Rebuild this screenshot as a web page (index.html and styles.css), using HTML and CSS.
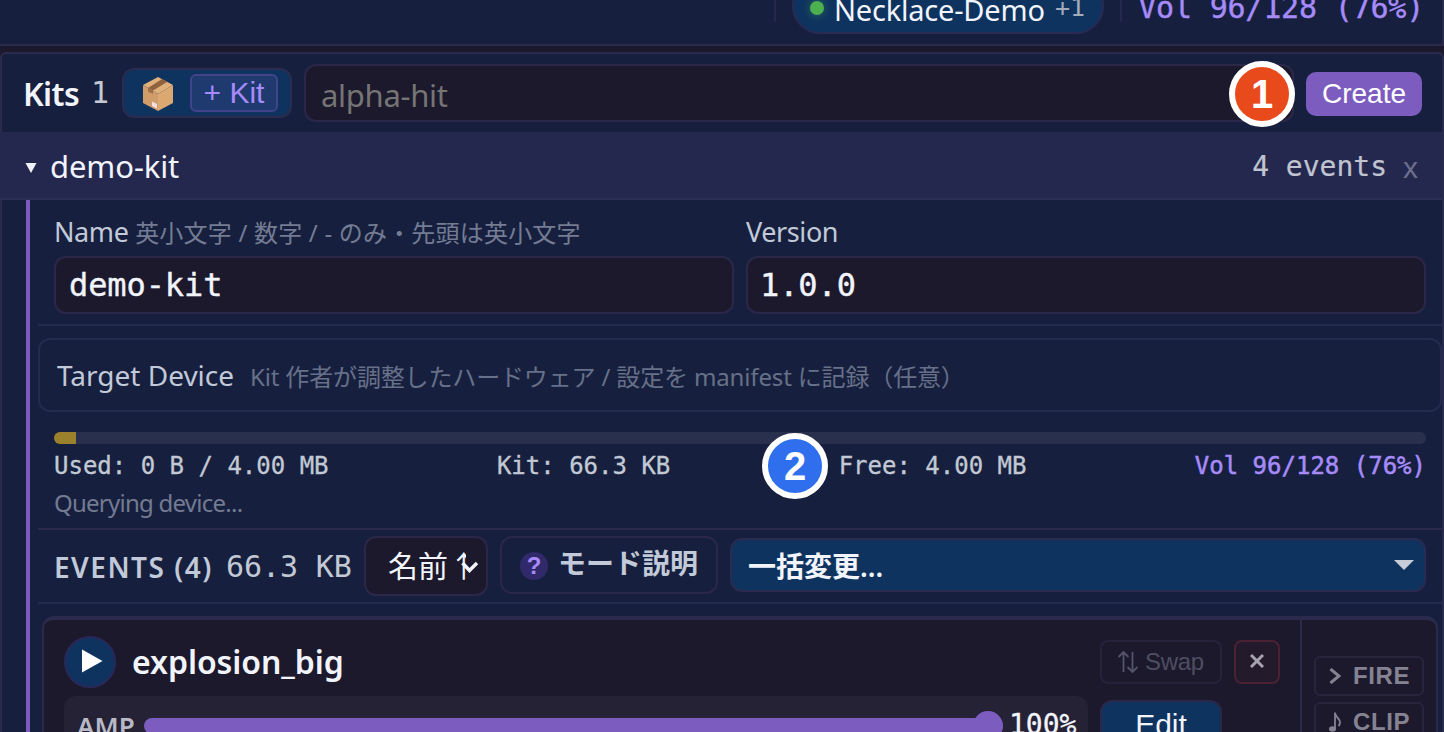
FILE: index.html
```html
<!DOCTYPE html>
<html lang="ja">
<head>
    <meta charset="UTF-8">
    <meta name="viewport" content="width=device-width, initial-scale=1.0">
    <title>Kits</title>
    <link rel="stylesheet" href="styles.css">
</head>
<body>
    <div class="topbar">
        <span class="sep"></span>
        <div class="device">
            <span class="dot"></span>
            <span class="device-name">Necklace-Demo</span>
            <span class="device-more">+1</span>
        </div>
        <span class="sep"></span>
        <span class="top-vol">Vol 96/128 (76%)</span>
    </div>

    <div class="panel">
        <div class="kits-header">
            <span class="kits-title">Kits</span>
            <span class="kits-count">1</span>
            <div class="kit-actions">
                <svg class="box-icon" viewBox="0 0 32 36" width="32" height="36">
                    <path d="M16 1 L31 9 L16 18 L1 9 Z" fill="#e0b07c"/>
                    <path d="M1 9 L16 18 V35 L1 27 Z" fill="#d09c69"/>
                    <path d="M31 9 L16 18 V35 L31 27 Z" fill="#dba872"/>
                    <path d="M20 3 L25 6 L11 14.500 L6 12 Z" fill="#8e623f"/>
                    <path d="M6 12 L11 14.500 V18 L6 15.500 Z" fill="#a06f45"/>
                    <path d="M10 25.500 L15 28 V32.500 L10 30 Z" fill="#f3dfe2"/>
                </svg>
                <button class="add-kit">+ Kit</button>
            </div>
            <input class="new-kit" type="text" placeholder="alpha-hit">
            <button class="create">Create</button>
        </div>

        <div class="kit-row">
            <svg class="caret" viewBox="0 0 12 10" width="12" height="10"><path d="M0.500 0 H11.500 L6 10 Z" fill="#f0f2fa"/></svg>
            <span class="kit-name">demo-kit</span>
            <span class="kit-events">4 events</span>
            <span class="kit-remove">x</span>
        </div>

        <div class="kit-body">
            <div class="fields">
                <div class="field">
                    <label for="name">Name <small>英小文字 / 数字 / - のみ・先頭は英小文字</small></label>
                    <input type="text" id="name" value="demo-kit">
                </div>
                <div class="field">
                    <label for="version">Version</label>
                    <input type="text" id="version" value="1.0.0">
                </div>
            </div>

            <div class="target">
                <span class="target-title">Target Device</span>
                <span class="target-note">Kit 作者が調整したハードウェア / 設定を manifest に記録（任意）</span>
            </div>

            <div class="storage">
                <div class="bar"><div class="bar-fill"></div></div>
                <div class="stats">
                    <span>Used: 0 B / 4.00 MB</span>
                    <span>Kit: 66.3 KB</span>
                    <span>Free: 4.00 MB</span>
                    <span class="vol">Vol 96/128 (76%)</span>
                </div>
                <div class="query">Querying device...</div>
            </div>

            <div class="events-bar">
                <span class="events-title">EVENTS (4)</span>
                <span class="events-size">66.3 KB</span>
                <div class="sort">
                    <div class="sort-label">名前 ↑</div>
                    <svg class="sort-caret" viewBox="0 0 20 14" width="20" height="14"><path d="M2.500 2 L9.500 9.500 L17 2" fill="none" stroke="#f2f4fc" stroke-width="3.500"/></svg>
                </div>
                <button class="mode"><span class="help">?</span><span class="mode-text">モード説明</span></button>
                <div class="bulk">
                    <span>一括変更...</span>
                    <svg viewBox="0 0 20 10" width="20" height="10"><path d="M0 0 H20 L10 10 Z" fill="#c8ccd8"/></svg>
                </div>
            </div>

            <div class="event">
                <div class="event-main">
                    <div class="event-head">
                        <div class="play"><svg viewBox="0 0 21 24" width="21" height="24"><path d="M0 0.500 L20.500 12 L0 23.500 Z" fill="#fff"/></svg></div>
                        <span class="event-name">explosion_big</span>
                        <button class="swap">
                            <svg viewBox="0 0 20 22" width="20" height="22"><path d="M5.500 21 V1 M0.500 6 L5.500 1 L10.500 6 M14.500 1 V21 M9.500 16 L14.500 21 L19.500 16" fill="none" stroke="#55546a" stroke-width="1.800"/></svg>
                            Swap
                        </button>
                        <button class="delete"><svg viewBox="0 0 14 14" width="14" height="14"><path d="M1 1 L13 13 M13 1 L1 13" stroke="#a7a3ae" stroke-width="3"/></svg></button>
                    </div>
                    <div class="event-controls">
                        <div class="amp">
                            <span class="amp-label">AMP</span>
                            <div class="slider"><span class="thumb"></span></div>
                            <span class="amp-value">100%</span>
                        </div>
                        <button class="edit">Edit</button>
                    </div>
                </div>
                <div class="event-side">
                    <button><svg viewBox="0 0 12 16" width="12" height="16"><path d="M1.500 1 L10 8 L1.500 15" fill="none" stroke="#858392" stroke-width="3"/></svg>FIRE</button>
                    <button><svg viewBox="0 0 12 20" width="12" height="20"><ellipse cx="3.500" cy="17" rx="3.500" ry="2.700" fill="#858392"/><path d="M6 17 V0.500 C6.500 6 11.500 7 11 10.500 C11 12 10.500 13 9.500 14" fill="none" stroke="#858392" stroke-width="1.800"/></svg>CLIP</button>
                </div>
            </div>
        </div>
    </div>

    <!-- Numbered callouts -->
    <div class="callout callout-1">1</div>
    <div class="callout callout-2">2</div>
</body>
</html>
```
FILE: styles.css
```css
* {
    box-sizing: border-box;
}
body {
    margin: 0;
    height: 732px;
    overflow: hidden;
    position: relative;
    background-color: #1c192c;
    color: #f2f4fc;
    font-family: "Noto Sans", "Noto Sans CJK JP", sans-serif;
    white-space: nowrap;
}
button, input {
    margin: 0;
    padding: 0;
    border: 2px solid #2b2749;
    font-family: inherit;
}
button {
    font-family: "Liberation Sans", "Noto Sans CJK JP", sans-serif;
}
svg {
    display: block;
    flex: none;
}

/* Top bar */
.topbar {
    display: flex;
    justify-content: flex-end;
    align-items: flex-end;
    height: 46px;
    padding: 0 18px 10px 0;
    overflow: hidden;
    background-color: #16203e;
    border-bottom: 2px solid #2b2a4d;
    border-right: 2px solid #2b2a4d;
}
.sep {
    width: 2px;
    height: 40px;
    margin-bottom: 12px;
    background-color: #25284b;
}
.device {
    display: flex;
    align-items: center;
    width: 312px;
    height: 56px;
    margin: 0 16px;
    padding-left: 16px;
    background-color: #0f335f;
    border: 2px solid #2b2a55;
    border-radius: 28px;
}
.dot {
    width: 14px;
    height: 14px;
    margin: 3px 10px 0 0;
    border-radius: 50%;
    background-color: #4caf50;
    box-shadow: 0 0 8px rgba(76, 175, 80, 0.5);
}
.device-name {
    width: 221px;
    font-size: 29px;
    letter-spacing: -0.2px;
    line-height: 40px;
    margin-top: 7px;
}
.device-more {
    margin-top: 3px;
    font-family: "DejaVu Sans Mono", monospace;
    font-size: 25px;
    color: #a3abba;
}
.top-vol {
    width: 302px;
    margin-bottom: 8px;
    text-align: right;
    font-family: "DejaVu Sans Mono", monospace;
    font-size: 30px;
    line-height: 36px;
    letter-spacing: -0.2px;
    color: #a78bfa;
    -webkit-text-stroke: 0.4px;
}

/* Kits panel */
.panel {
    height: 680px;
    margin-top: 6px;
    border: 2px solid #2b2a4d;
    border-bottom: none;
    border-radius: 6px 6px 0 0;
    background-color: #16203e;
}
.kits-header {
    display: flex;
    align-items: center;
    height: 78px;
    padding: 0 20px 0 21px;
}
.kits-title {
    width: 68px;
    font-size: 32px;
    font-weight: 600;
    letter-spacing: -0.6px;
}
.kits-count {
    width: 31px;
    margin-top: -2px;
    font-size: 30px;
    font-family: "DejaVu Sans Mono", monospace;
    color: #c2c9d2;
}
.kit-actions {
    display: flex;
    align-items: center;
    justify-content: space-between;
    width: 170px;
    height: 50px;
    margin-right: 12px;
    padding: 0 12px 0 18px;
    background-color: #0f335f;
    border: 2px solid #2b2a50;
    border-radius: 12px;
}
.box-icon {
    margin-top: 2px;
}
.add-kit {
    width: 88px;
    height: 38px;
    font-size: 30px;
    line-height: 34px;
    color: #a78bfa;
    background-color: #1e3a6e;
    border-color: #42438a;
    border-radius: 6px;
}
.new-kit {
    width: 990px;
    height: 58px;
    margin-right: 12px;
    padding: 3px 15px 0;
    font-size: 31px;
    letter-spacing: -0.3px;
    background-color: #1c192c;
    border-radius: 12px;
}
.new-kit::placeholder {
    color: #757575;
}
.create {
    width: 116px;
    height: 44px;
    margin-top: 2px;
    font-size: 28px;
    color: #fff;
    background-color: #7c5cbf;
    border: none;
    border-radius: 10px;
}

.kit-row {
    display: flex;
    align-items: center;
    height: 68px;
    margin-left: -2px;
    padding: 2px 24px 0 25px;
    background-color: #24284f;
    border-bottom: 2px solid #2b2e56;
}
.caret {
    margin-top: 4px;
}
.kit-name {
    flex: 1;
    margin-left: 13px;
    font-size: 31px;
    letter-spacing: -0.1px;
}
.kit-events {
    font-size: 28px;
    font-family: "DejaVu Sans Mono", monospace;
    color: #c0c4d0;
    -webkit-text-stroke: 0.2px;
}
.kit-remove {
    margin: 4px 0 0 16px;
    font-size: 30px;
    font-family: "Liberation Sans", sans-serif;
    color: #6b6e8c;
}

.kit-body {
    height: 532px;
    overflow: hidden;
    margin-left: 24px;
    padding-left: 8px;
    border-left: 4px solid #7c5cbf;
}
.fields {
    display: grid;
    grid-template-columns: 1fr 1fr;
    gap: 12px;
    height: 126px;
    padding: 14px 16px 0;
    border-bottom: 2px solid #242b4e;
}
.field label {
    display: block;
    height: 42px;
    line-height: 36px;
    font-size: 27px;
    letter-spacing: -0.4px;
    color: #c2c9d8;
}
.field small {
    font-size: 24px;
    letter-spacing: 0.2px;
    color: #747c94;
}
.field input {
    display: block;
    width: 100%;
    height: 58px;
    padding: 0 13px;
    font-family: "DejaVu Sans Mono", monospace;
    font-size: 32px;
    letter-spacing: -0.1px;
    color: #f2f4fc;
    background-color: #1c192c;
    border-radius: 12px;
    -webkit-text-stroke: 0.4px;
}
.field + .field input {
    padding-left: 12px;
}

.target {
    display: flex;
    align-items: center;
    height: 74px;
    margin-top: 12px;
    padding-left: 17px;
    border: 2px solid #242b4c;
    border-radius: 12px;
}
.target-title {
    width: 193px;
    font-size: 28px;
    color: #c2c9d8;
}
.target-note {
    font-size: 24px;
    letter-spacing: -0.15px;
    color: #677089;
}

.storage {
    height: 118px;
    padding: 20px 16px 0;
    border-bottom: 2px solid #2b2a4d;
}
.bar {
    height: 12px;
    overflow: hidden;
    border-radius: 6px;
    background-color: #29304d;
}
.bar-fill {
    width: 22px;
    height: 12px;
    background-color: #9c812c;
}
.stats {
    display: flex;
    justify-content: space-between;
    margin-top: 4px;
    font-family: "DejaVu Sans Mono", monospace;
    font-size: 24px;
    line-height: 36px;
    color: #c2c9d4;
    -webkit-text-stroke: 0.3px;
}
.stats .vol {
    color: #a78bfa;
    -webkit-text-stroke: 0.5px;
}
.query {
    font-size: 24px;
    line-height: 38px;
    letter-spacing: -0.75px;
    color: #737a92;
}

.events-bar {
    display: flex;
    align-items: center;
    height: 74px;
    padding: 0 16px;
    border-bottom: 2px solid #242b4c;
}
.events-title {
    width: 172px;
    margin-top: 2px;
    font-size: 28px;
    font-weight: 600;
    letter-spacing: 1.5px;
    color: #c2c9d8;
}
.events-size {
    width: 138px;
    font-family: "DejaVu Sans Mono", monospace;
    font-size: 30px;
    letter-spacing: -0.1px;
    color: #c2c9d4;
}
.sort {
    position: relative;
    width: 124px;
    height: 60px;
    padding-left: 22px;
    font-size: 30px;
    line-height: 56px;
    background-color: #1c192c;
    border: 2px solid #2b2749;
    border-radius: 12px;
}
.sort-label {
    width: 78px;
    overflow: hidden;
    word-spacing: -7px;
}
/* Caret sits over the clipped label */
.sort-caret {
    position: absolute;
    right: 6px;
    top: 23px;
}
.mode {
    display: flex;
    align-items: center;
    width: 218px;
    height: 58px;
    margin: -2px 12px 0;
    padding-left: 18px;
    background: none;
    border-radius: 12px;
    color: #c2c9d8;
}
.help {
    width: 28px;
    height: 28px;
    margin: 1px 10px 0 0;
    border-radius: 50%;
    background-color: #30296a;
    color: #a78bfa;
    font-size: 24px;
    font-weight: bold;
    line-height: 28px;
}
.mode-text {
    font-size: 28px;
    font-weight: bold;
    line-height: 40px;
}
.bulk {
    display: flex;
    align-items: center;
    justify-content: space-between;
    flex: 1;
    height: 54px;
    margin-top: -2px;
    padding: 0 10px 0 16px;
    font-size: 28px;
    font-weight: 600;
    background-color: #0f335f;
    border: 2px solid #2b2a50;
    border-radius: 12px;
}

/* Event card */
.event {
    display: flex;
    height: 116px;
    margin: 12px 4px 0;
    background-color: #1c192c;
    border: 2px solid #2b2a4d;
    border-top-width: 4px;
    border-bottom: none;
    border-radius: 12px 12px 0 0;
}
.event-main {
    flex: 1;
    padding: 16px 20px 0;
}
.event-head {
    display: flex;
    align-items: center;
    height: 52px;
}
.play {
    display: flex;
    align-items: center;
    justify-content: center;
    width: 52px;
    height: 52px;
    padding: 0 0 3px 4px;
    background-color: #0f335f;
    border: 2px solid #29285a;
    border-radius: 50%;
}
.event-name {
    flex: 1;
    margin-left: 16px;
    margin-top: -2px;
    font-size: 32px;
    font-weight: 600;
    letter-spacing: -0.05px;
}
.swap {
    display: flex;
    align-items: center;
    justify-content: center;
    gap: 7px;
    width: 122px;
    height: 44px;
    font-size: 24px;
    letter-spacing: -0.3px;
    color: #4f4d62;
    background: none;
    border-color: #25223b;
    border-radius: 8px;
}
.delete {
    display: flex;
    align-items: center;
    justify-content: center;
    width: 46px;
    height: 44px;
    margin-left: 12px;
    padding-bottom: 2px;
    background-color: #231a2c;
    border-color: #4a2233;
    border-radius: 8px;
}
.event-controls {
    display: flex;
    margin-top: 8px;
}
.amp {
    display: flex;
    align-items: center;
    width: 1024px;
    height: 60px;
    padding-left: 13px;
    background-color: #252235;
    border-radius: 12px;
}
.amp-label {
    width: 67px;
    font-size: 26px;
    font-weight: 600;
    letter-spacing: 0;
    color: #b9b8c6;
}
.slider {
    display: flex;
    align-items: center;
    justify-content: flex-end;
    width: 859px;
    height: 16px;
    border-radius: 8px;
    background-color: #7c5cbf;
}
.thumb {
    width: 30px;
    height: 30px;
    border-radius: 50%;
    background-color: #7c5cbf;
}
.amp-value {
    margin: -4px 0 0 6px;
    font-family: "DejaVu Sans Mono", monospace;
    font-size: 28px;
    -webkit-text-stroke: 0.3px;
}
.edit {
    width: 122px;
    height: 52px;
    margin: 4px 0 0 12px;
    padding-bottom: 2px;
    font-size: 30px;
    color: #f2f4fc;
    background-color: #0f335f;
    border-radius: 12px;
}
.event-side {
    width: 136px;
    padding: 36px 12px 0;
    border-left: 2px solid #2b2a4d;
}
.event-side button {
    display: flex;
    align-items: center;
    gap: 12px;
    width: 110px;
    height: 40px;
    margin-bottom: 6px;
    padding: 0 0 1px 13px;
    font-size: 24px;
    font-weight: bold;
    letter-spacing: 0.6px;
    color: #858392;
    background: none;
    border-color: #27243c;
    border-radius: 6px;
}

/* Callouts lie over the panel */
.callout {
    position: absolute;
    width: 66px;
    height: 66px;
    border: 6px solid #fff;
    border-radius: 50%;
    font-family: "Liberation Sans", sans-serif;
    font-size: 40px;
    font-weight: bold;
    line-height: 54px;
    text-align: center;
    color: #fff;
}
.callout-1 {
    left: 1229px;
    top: 61px;
    background-color: #e84a1c;
}
.callout-2 {
    left: 762px;
    top: 433px;
    background-color: #2f6fed;
}
```
